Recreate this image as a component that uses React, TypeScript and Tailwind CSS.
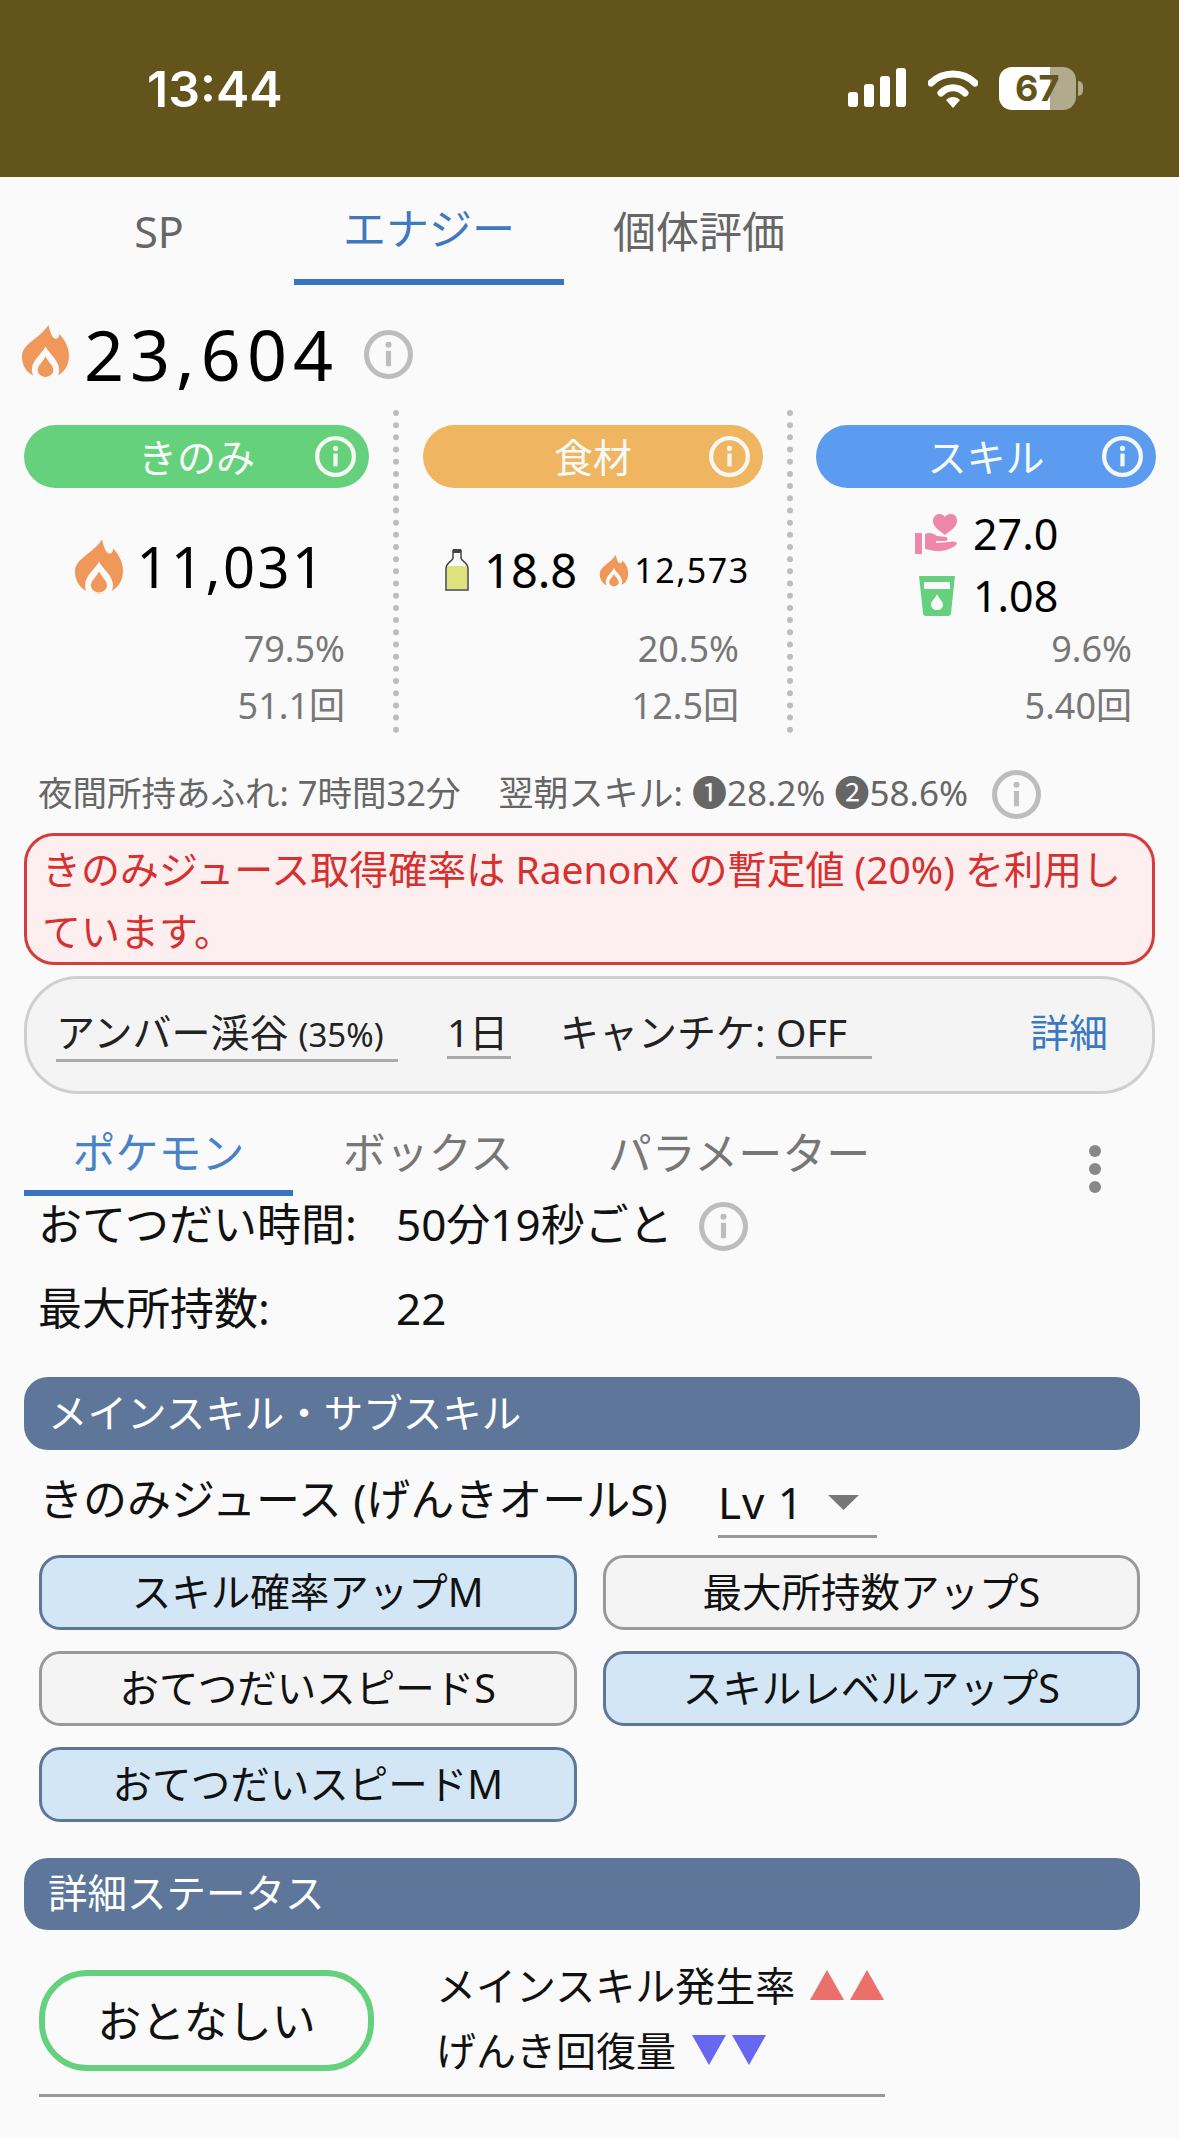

function Flame({ className }: { className: string }) {
  return (
    <svg viewBox="0 0 48 54" className={className}>
      <path d="M27 0C29 9 31 13 34 14C37 14 38 12 38 9C44 15 48 23 48 31C48 44 40 54 24 54C8 54 0 44 0 32C0 19 17 15 27 0Z" fill="#f0975a" />
      <path d="M24 22C28 30 38 36 38 46C38 50 36 53 34 54L14 54C12 53 10 50 10 46C10 36 20 30 24 22Z" fill="#fafafa" />
      <path d="M24 32C27 38 32 41 32 46C32 50 28 53 24 53C20 53 16 50 16 46C16 41 21 38 24 32Z" fill="#f0975a" />
    </svg>
  )
}

function InfoIcon({ className, color }: { className: string; color: string }) {
  return (
    <svg viewBox="0 0 48 48" className={className}>
      <circle cx="24" cy="24" r="21.5" fill="none" stroke={color} strokeWidth="5" />
      <circle cx="24" cy="14.5" r="3" fill={color} />
      <rect x="21.5" y="20.5" width="5" height="15" fill={color} />
    </svg>
  )
}

function Bottle() {
  return (
    <svg viewBox="0 0 24 42" className="w-[24px] h-[42px] shrink-0">
      <path d="M8 1.5H16V9C16 12 23 13 23 20V41H1V20C1 13 8 12 8 9Z" fill="#fafafa" stroke="#444" strokeWidth="1.5" />
      <rect x="2" y="17" width="20" height="23" fill="#dde27f" />
      <rect x="8" y="0" width="8" height="4" fill="#444" />
    </svg>
  )
}

function HeartHand() {
  return (
    <svg viewBox="0 0 42 40" className="w-[42px] h-[40px] shrink-0" fill="#ee88a8">
      <path d="M30 21C24 16 18 13 18 7C18 3 21 0 24 0C27 0 29 1 30 3C31 1 33 0 36 0C40 0 42 3 42 7C42 13 36 16 30 21Z" />
      <rect x="0" y="19" width="7" height="21" />
      <path d="M10 20C14 18 18 19 22 22L31 23C33 23 33 27 31 27L21 27V29L35 28C39 27 42 28 42 30C38 34 30 38 20 37L10 35Z" />
    </svg>
  )
}

function Cup() {
  return (
    <svg viewBox="0 0 36 40" className="w-[36px] h-[40px] shrink-0">
      <path d="M0 0H36L32 37C32 39 31 40 29 40H7C5 40 4 39 4 37Z" fill="#66d17d" />
      <rect x="5" y="6" width="26" height="7" fill="#fafafa" />
      <path d="M18 18C20 23 24 25 24 29C24 32 21 34 18 34C15 34 12 32 12 29C12 25 16 23 18 18Z" fill="#fafafa" />
    </svg>
  )
}

function Triangle({ color, down }: { color: string; down?: boolean }) {
  return (
    <svg viewBox="0 0 34 30" className="w-[34px] h-[30px] shrink-0">
      <polygon points={down ? "0,0 34,0 17,30" : "17,0 34,30 0,30"} fill={color} />
    </svg>
  )
}

function Pill({ label, color, width }: { label: string; color: string; width: string }) {
  return (
    <div className={`relative h-[63px] ${width} ${color} rounded-full flex items-center justify-center text-[39px] leading-[63px] text-[#f6fbf7]`}>
      {label}
      <InfoIcon className="absolute right-[13px] top-[11px] w-[41px] h-[41px]" color="#f4f8f0" />
    </div>
  )
}

function Divider() {
  return <div className="w-0 h-[323px] border-l-[6px] border-dotted border-[#bdbdbd] shrink-0" />
}

function Percent({ pct, count, pr }: { pct: string; count: string; pr: string }) {
  return (
    <div className={`text-right text-[36px] leading-[57px] text-[#777] ${pr}`}>
      <div>{pct}</div>
      <div>{count}</div>
    </div>
  )
}

function SectionHeader({ title, h }: { title: string; h: string }) {
  return (
    <div className={`ml-[24px] w-[1116px] ${h} bg-[#5d7699] rounded-[24px] pl-[24px] flex items-center text-[39.5px] text-white`}>
      {title}
    </div>
  )
}

function SubSkill({ label, on }: { label: string; on?: boolean }) {
  return (
    <div className={`h-[75px] rounded-[21px] border-[3px] flex items-center justify-center text-[39.5px] text-[#111] ${on ? "bg-[#d3e6f5] border-[#5d7699]" : "bg-[#f4f4f4] border-[#999]"}`}>
      {label}
    </div>
  )
}

export default function App() {
  return (
    <div className="w-[1179px] h-[2138px] overflow-hidden bg-[#fafafa] font-['Noto_Sans','Noto_Sans_CJK_JP',sans-serif] text-[#111]">
      {/* status bar */}
      <div className="h-[177px] bg-[#63541c] flex items-center pl-[147px] pr-[96px]">
        <span className="font-['Inter',sans-serif] font-semibold text-[50px] leading-none text-white">13:44</span>
        <div className="ml-auto flex items-center">
          <div className="flex items-end gap-[6px] h-[39px] mt-[-3px]">
            <div className="w-[10px] h-[15px] rounded-[3px] bg-white" />
            <div className="w-[10px] h-[23px] rounded-[3px] bg-white" />
            <div className="w-[10px] h-[31px] rounded-[3px] bg-white" />
            <div className="w-[10px] h-[39px] rounded-[3px] bg-white" />
          </div>
          <svg viewBox="0 0 50 40" className="w-[50px] h-[40px] ml-[22px]">
            <path d="M3 14C15 2 35 2 47 14" fill="none" stroke="#fff" strokeWidth="7" strokeLinecap="round" />
            <path d="M13 24C20 17 30 17 37 24" fill="none" stroke="#fff" strokeWidth="7" strokeLinecap="round" />
            <path d="M18 31C22 27 28 27 32 31L25 39Z" fill="#fff" />
          </svg>
          <div className="relative w-[77px] h-[43px] ml-[21px] rounded-[13px] overflow-hidden flex">
            <div className="w-[51px] bg-white" />
            <div className="flex-1 bg-[#b1aa8d]" />
            <span className="absolute left-[16px] top-0 font-['Inter',sans-serif] font-bold text-[36px] leading-[43px] text-[#63541c]">67</span>
          </div>
          <div className="w-[5px] h-[15px] ml-[2px] rounded-r-full bg-[#b1aa8d]" />
        </div>
      </div>

      {/* top tabs */}
      <div className="flex pl-[24px] h-[108px] text-[43px] text-[#666]">
        <div className="w-[270px] h-full flex items-center justify-center pt-[3px]">SP</div>
        <div className="w-[270px] h-full flex items-center justify-center pt-[3px] text-[#3f78bd] border-b-[6px] border-[#3874c2]">エナジー</div>
        <div className="w-[270px] h-full flex items-center justify-center pt-[3px]">個体評価</div>
      </div>

      {/* total */}
      <div className="mt-[36px] pl-[22px] h-[66px] flex items-center">
        <Flame className="w-[47px] h-[53px] mt-[-5px]" />
        <span className="ml-[15px] text-[70px] leading-[66px] tracking-[6px] text-black">23,604</span>
        <InfoIcon className="ml-[25px] w-[49px] h-[49px]" color="#bdbdbd" />
      </div>

      {/* strength columns */}
      <div className="mt-[23px] ml-[24px] flex h-[323px]">
        <div className="w-[345px] pt-[15px]">
          <Pill label="きのみ" color="bg-[#66d17d]" width="w-[345px]" />
          <div className="h-[132px] pt-[24px] pl-[9px] flex items-center justify-center">
            <Flame className="w-[48px] h-[55px]" />
            <span className="ml-[13px] text-[56px] leading-[60px] tracking-[2.5px] text-black">11,031</span>
          </div>
          <Percent pct="79.5%" count="51.1回" pr="pr-[24px]" />
        </div>
        <div className="ml-[24px]"><Divider /></div>
        <div className="w-[340px] ml-[24px] pt-[15px]">
          <Pill label="食材" color="bg-[#efb561]" width="w-[340px]" />
          <div className="h-[132px] pt-[32px] pl-[22px] flex items-center whitespace-nowrap">
            <Bottle />
            <span className="ml-[15px] text-[47px] leading-[50px] text-black">18.8</span>
            <Flame className="ml-[22px] w-[30px] h-[32px] mt-[2px]" />
            <span className="ml-[5px] text-[34px] leading-[40px] tracking-[1.5px] text-black">12,573</span>
          </div>
          <Percent pct="20.5%" count="12.5回" pr="pr-[24px]" />
        </div>
        <div className="ml-[24px]"><Divider /></div>
        <div className="w-[340px] ml-[23px] pt-[15px]">
          <Pill label="スキル" color="bg-[#5b9bf0]" width="w-[340px]" />
          <div className="h-[132px] pt-[21px] pl-[99px] flex flex-col gap-[13px]">
            <div className="h-[50px] flex items-center">
              <HeartHand />
              <span className="ml-[16px] text-[43px] leading-[50px] text-black">27.0</span>
            </div>
            <div className="h-[48px] flex items-center pl-[4px]">
              <Cup />
              <span className="ml-[18px] text-[43px] leading-[50px] text-black">1.08</span>
            </div>
          </div>
          <Percent pct="9.6%" count="5.40回" pr="pr-[24px]" />
        </div>
      </div>

      {/* night row */}
      <div className="mt-[37px] pl-[38px] h-[49px] flex items-center text-[34.5px] leading-[45px] text-[#666]">
        <span className="mb-[4px]">夜間所持あふれ: 7時間32分</span>
        <span className="ml-[38px] mb-[4px] text-[35px]">翌朝スキル: ❶28.2% ❷58.6%</span>
        <InfoIcon className="ml-[24px] w-[49px] h-[49px]" color="#bdbdbd" />
      </div>

      {/* warning */}
      <div className="mt-[14px] mx-[24px] h-[132px] border-[3px] border-[#d63c3c] bg-[#fdeff0] rounded-[30px] pt-[2px] pl-[15px] pr-[16px] text-[39px] leading-[62px] text-[#d6302f]">
        きのみジュース取得確率は RaenonX の暫定値 (20%) を利用しています。
      </div>

      {/* filter */}
      <div className="mt-[11px] mx-[24px] h-[118px] border-[3px] border-[#cfcfcf] bg-[#f4f4f4] rounded-[54px] pt-[29px] pl-[29px] flex items-start text-[39px] leading-[48px] text-[#222] whitespace-nowrap">
        <div className="w-[342px] border-b-[3px] border-[#aaa]">アンバー渓谷 <span className="text-[33px]">(35%)</span></div>
        <div className="w-[64px] ml-[49px] border-b-[3px] border-[#aaa]">1日</div>
        <div className="ml-[49px] w-[216px]">キャンチケ:</div>
        <div className="w-[96px] border-b-[3px] border-[#aaa]">OFF</div>
        <div className="ml-[158px] text-[#3a78c0]">詳細</div>
      </div>

      {/* lower tabs */}
      <div className="flex ml-[24px] h-[102px] text-[43px] leading-[60px] text-[#777] whitespace-nowrap">
        <div className="w-[269px] pt-[29px] h-full text-center text-[#4a82c6] border-b-[6px] border-[#3874c2]">ポケモン</div>
        <div className="w-[270px] pt-[29px] text-center">ボックス</div>
        <div className="w-[352px] pt-[29px] text-center text-[44px]">パラメーター</div>
        <div className="ml-[174px] pt-[51px] flex flex-col gap-[6px]">
          <div className="w-[12px] h-[12px] rounded-full bg-[#888]" />
          <div className="w-[12px] h-[12px] rounded-full bg-[#888]" />
          <div className="w-[12px] h-[12px] rounded-full bg-[#888]" />
        </div>
      </div>

      {/* pokemon rows */}
      <div className="pl-[38px] h-[56px] flex items-center text-[44px] leading-[56px]">
        <span className="w-[358px]">おてつだい時間:</span>
        <span>50分19秒ごと</span>
        <InfoIcon className="ml-[26px] mt-[4px] w-[49px] h-[49px]" color="#bdbdbd" />
      </div>
      <div className="mt-[28px] pl-[38px] h-[56px] flex items-center text-[44px] leading-[56px]">
        <span className="w-[358px]">最大所持数:</span>
        <span>22</span>
      </div>

      <div className="mt-[41px]"><SectionHeader title="メインスキル・サブスキル" h="h-[73px]" /></div>

      <div className="mt-[21px] pl-[39px] h-[67px] flex items-start text-[44px] leading-[56px]">
        <span className="w-[629px] whitespace-nowrap">きのみジュース (げんきオールS)</span>
        <div className="ml-[50px] w-[159px] h-[67px] border-b-[3px] border-[#999] flex items-start leading-[62px]">
          <span className="w-[110px] tracking-[1px]">Lv 1</span>
          <svg viewBox="0 0 31 15" className="w-[31px] h-[15px] mt-[24px]">
            <polygon points="0,0 31,0 15.5,15" fill="#777" />
          </svg>
        </div>
      </div>

      <div className="mt-[17px] ml-[39px] w-[1101px] grid grid-cols-2 gap-x-[26px] gap-y-[21px]">
        <SubSkill label="スキル確率アップM" on />
        <SubSkill label="最大所持数アップS" />
        <SubSkill label="おてつだいスピードS" />
        <SubSkill label="スキルレベルアップS" on />
        <SubSkill label="おてつだいスピードM" on />
      </div>

      <div className="mt-[36px]"><SectionHeader title="詳細ステータス" h="h-[72px]" /></div>

      <div className="mt-[40px] ml-[39px] h-[101px] flex items-center">
        <div className="w-[335px] h-[101px] border-[6px] border-[#66d17d] rounded-[48px] flex items-center justify-center text-[44px]">おとなしい</div>
        <div className="ml-[62px] mt-[-6px] text-[40px] leading-[65px]">
          <div className="flex items-center">
            <span>メインスキル発生率</span>
            <div className="ml-[15px] flex gap-[6px]">
              <Triangle color="#ea706b" />
              <Triangle color="#ea706b" />
            </div>
          </div>
          <div className="flex items-center">
            <span>げんき回復量</span>
            <div className="ml-[16px] flex gap-[6px]">
              <Triangle color="#6767f0" down />
              <Triangle color="#6767f0" down />
            </div>
          </div>
        </div>
      </div>

      <div className="mt-[23px] ml-[39px] w-[846px] h-[3px] bg-[#999]" />
    </div>
  )
}
